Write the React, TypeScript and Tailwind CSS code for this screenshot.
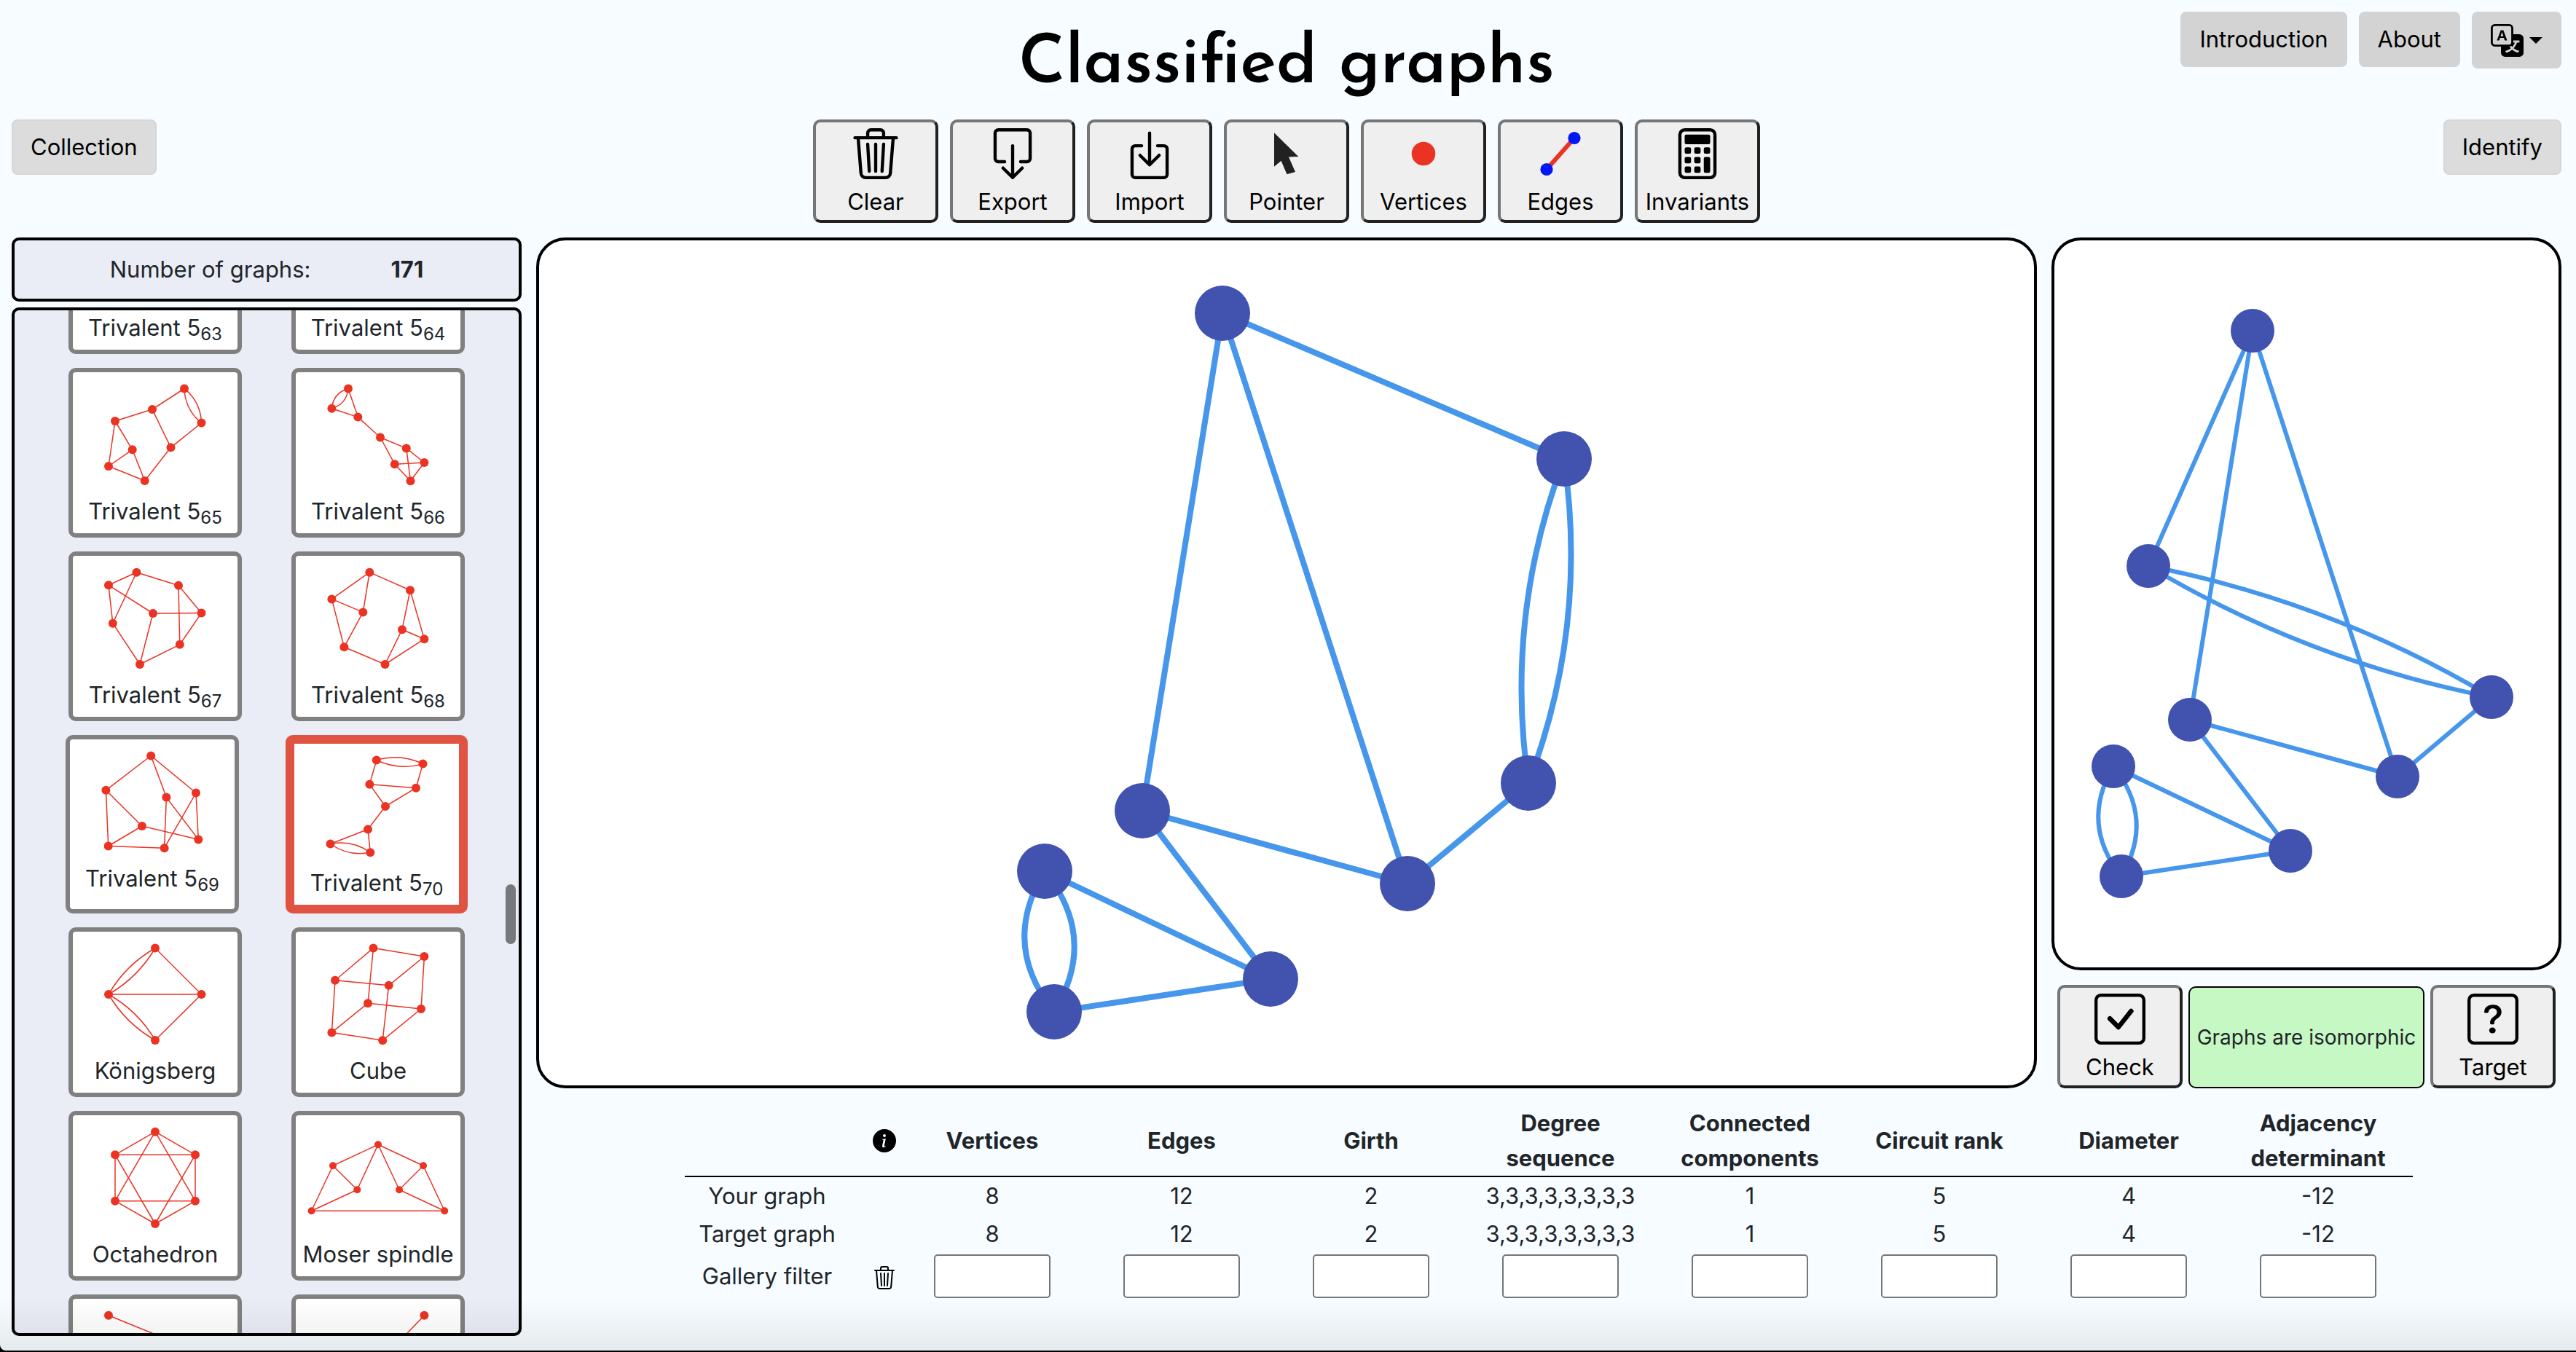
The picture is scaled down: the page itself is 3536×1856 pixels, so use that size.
import type { ReactNode } from 'react';
import {
  BsBoxArrowDown,
  BsBoxArrowInDown,
  BsCalculator,
  BsCheckSquare,
  BsInfoCircleFill,
  BsQuestionSquare,
  BsTranslate,
  BsTrash3,
} from 'react-icons/bs';

type Point = [number, number];
// An edge joins two vertices; the optional third entry is the sideways bulge of a curved edge.
type Edge = [number, number, number?];
type GraphData = { nodes: Point[]; edges: Edge[] };

function edgePath(nodes: Point[], [a, b, bulge = 0]: Edge) {
  const [x1, y1] = nodes[a];
  const [x2, y2] = nodes[b];
  if (!bulge) return `M${x1} ${y1}L${x2} ${y2}`;
  const len = Math.hypot(x2 - x1, y2 - y1);
  const cx = (x1 + x2) / 2 - ((y2 - y1) / len) * bulge * 2;
  const cy = (y1 + y2) / 2 + ((x2 - x1) / len) * bulge * 2;
  return `M${x1} ${y1}Q${cx} ${cy} ${x2} ${y2}`;
}

type DrawingProps = {
  graph: GraphData;
  width: number;
  height: number;
  radius: number;
  stroke: number;
  edgeColor: string;
  nodeColor: string;
  className: string;
  label: string;
};

function GraphDrawing({ graph, width, height, radius, stroke, edgeColor, nodeColor, className, label }: DrawingProps) {
  return (
    <svg viewBox={`0 0 ${width} ${height}`} className={className} role="img" aria-label={label}>
      <g fill="none" stroke={edgeColor} strokeWidth={stroke}>
        {graph.edges.map((edge, i) => (
          <path key={i} d={edgePath(graph.nodes, edge)} />
        ))}
      </g>
      <g fill={nodeColor}>
        {graph.nodes.map(([x, y], i) => (
          <circle key={i} cx={x} cy={y} r={radius} />
        ))}
      </g>
    </svg>
  );
}

const yourGraph: GraphData = {
  nodes: [[938, 100], [1407, 300], [1358, 745], [1192, 883], [828, 783], [1004, 1014], [694, 866], [707, 1059]],
  edges: [[0, 1], [0, 4], [0, 3], [1, 2, 29], [1, 2, -29], [2, 3], [3, 4], [4, 5], [5, 6], [5, 7], [6, 7, 34], [6, 7, -34]],
};

const targetGraph: GraphData = {
  nodes: [[272, 124], [129, 447], [600, 627], [471, 736], [186, 658], [324, 838], [81, 722], [92, 873]],
  edges: [[0, 1], [0, 4], [0, 3], [1, 2, 22], [1, 2, -22], [2, 3], [3, 4], [4, 5], [5, 6], [5, 7], [6, 7, 26], [6, 7, -26]],
};

type Item = { name: string; sub?: string; selected?: boolean; radius?: number; graph: GraphData };

const empty: GraphData = { nodes: [], edges: [] };

const gallery: Item[][] = [
  [
    { name: 'Trivalent 5', sub: '63', graph: empty },
    { name: 'Trivalent 5', sub: '64', graph: empty },
  ],
  [
    {
      name: 'Trivalent 5',
      sub: '65',
      graph: {
        nodes: [[153, 22.5], [109, 51], [58, 67], [81.7, 106.3], [49, 129], [98.7, 149], [134.5, 103.3], [176.5, 69.6]],
        edges: [[0, 1], [1, 2], [2, 3], [2, 4], [3, 4], [3, 5], [4, 5], [5, 6], [6, 1], [6, 7], [0, 7, 6], [0, 7, -6]],
      },
    },
    {
      name: 'Trivalent 5',
      sub: '66',
      graph: {
        nodes: [[72, 22.5], [49.4, 49.7], [85.3, 61.6], [116, 89.5], [151.8, 104.4], [135.8, 126.2], [176.4, 124], [157.5, 149.2]],
        edges: [[0, 1, 6], [0, 1, -6], [0, 2], [1, 2], [2, 3], [3, 4], [3, 5], [4, 6], [4, 7], [5, 6], [5, 7], [6, 7]],
      },
    },
  ],
  [
    {
      name: 'Trivalent 5',
      sub: '67',
      graph: {
        nodes: [[87.4, 22.7], [49, 40.3], [145, 40.7], [110, 79], [176.5, 78.6], [54.8, 92.7], [146.8, 121.8], [92, 149]],
        edges: [[0, 1], [0, 2], [0, 5], [1, 5], [1, 3], [2, 4], [2, 6], [3, 4], [3, 7], [4, 6], [5, 7], [6, 7]],
      },
    },
    {
      name: 'Trivalent 5',
      sub: '68',
      graph: {
        nodes: [[101.3, 22.7], [49.4, 59.4], [157, 47.2], [92.3, 77.4], [146, 101.2], [176.4, 114.2], [66.4, 125.3], [122.5, 149]],
        edges: [[0, 1], [0, 3], [1, 3], [1, 6], [3, 6], [0, 2], [2, 4], [2, 5], [4, 5], [4, 7], [5, 7], [6, 7]],
      },
    },
  ],
  [
    {
      name: 'Trivalent 5',
      sub: '69',
      graph: {
        nodes: [[111.2, 22.5], [49.4, 69.8], [132.4, 79.6], [173, 73.5], [98.9, 119], [52.7, 146.5], [129.6, 149.2], [176.3, 137.4]],
        edges: [[0, 1], [0, 2], [0, 3], [1, 4], [1, 5], [4, 5], [5, 6], [4, 7], [2, 6], [2, 7], [3, 6], [3, 7]],
      },
    },
    {
      name: 'Trivalent 5',
      sub: '70',
      selected: true,
      graph: {
        nodes: [[112.8, 22.5], [176.5, 27.6], [103.3, 55.7], [167, 60.7], [125, 86], [101, 117.5], [49.5, 137.5], [104.3, 149.3]],
        edges: [[0, 1, 6], [0, 1, -6], [0, 2], [1, 3], [2, 3], [2, 4], [3, 4], [4, 5], [5, 6], [5, 7], [6, 7, 6], [6, 7, -6]],
      },
    },
  ],
  [
    {
      name: 'Königsberg',
      graph: {
        nodes: [[113, 22.5], [49, 86], [176.5, 86], [113, 149]],
        edges: [[0, 1, 6], [0, 1, -6], [1, 3, 6], [1, 3, -6], [0, 2], [1, 2], [2, 3]],
      },
    },
    {
      name: 'Cube',
      graph: {
        nodes: [[106.5, 22.4], [176.4, 34], [54, 66.7], [127.7, 73.8], [99, 98.2], [172, 106], [49.4, 138.4], [119.2, 149.2]],
        edges: [[0, 1], [0, 2], [1, 3], [2, 3], [0, 4], [1, 5], [2, 6], [3, 7], [4, 5], [4, 6], [5, 7], [6, 7]],
      },
    },
  ],
  [
    {
      name: 'Octahedron',
      graph: {
        nodes: [[113, 22.7], [58, 54.3], [168, 54.3], [58, 117.7], [168, 117.7], [113, 149]],
        edges: [[0, 1], [0, 2], [1, 2], [1, 3], [2, 4], [3, 4], [3, 5], [4, 5], [0, 3], [0, 4], [1, 5], [2, 5]],
      },
    },
    {
      name: 'Moser spindle',
      radius: 5,
      graph: {
        nodes: [[113, 40.3], [51, 69.3], [175, 69.3], [84.3, 102.3], [142, 102.3], [21.6, 131.3], [204.2, 131.3]],
        edges: [[0, 1], [0, 2], [0, 3], [0, 4], [1, 3], [1, 5], [3, 5], [2, 4], [2, 6], [4, 6], [5, 6]],
      },
    },
  ],
  [
    { name: '', graph: { nodes: [[49, 22.7], [177, 75]], edges: [[0, 1]] } },
    { name: '', graph: { nodes: [[176.4, 22.7], [112, 90]], edges: [[0, 1]] } },
  ],
];

function GalleryCard({ item }: { item: Item }) {
  return (
    <button
      type="button"
      aria-pressed={!!item.selected}
      className={
        item.selected
          ? 'flex flex-col rounded-[10px] border-12 border-[#e05342] bg-white'
          : 'flex flex-col rounded-[10px] border-6 border-[#808080] bg-white'
      }
    >
      <GraphDrawing
        graph={item.graph}
        width={226}
        height={167}
        radius={item.radius ?? 6}
        stroke={1.5}
        edgeColor="#ea3323"
        nodeColor="#ea3323"
        className="h-[167px] w-[226px]"
        label={`Drawing of ${item.name}${item.sub ?? ''}`}
      />
      <span className="h-[54px] w-full text-center text-[31px] leading-[48px] whitespace-nowrap">
        {item.name}
        {item.sub && <sub className="text-[24px]">{item.sub}</sub>}
      </span>
    </button>
  );
}

function ToolButton({ label, children }: { label: string; children: ReactNode }) {
  return (
    <button
      type="button"
      className="flex h-[142px] w-[172px] flex-col items-center rounded-[10px] border-4 border-t-[#767676] border-r-[#212121] border-b-[#212121] border-l-[#767676] bg-[#efefef] pt-2 text-black"
    >
      <span className="size-[70px]">{children}</span>
      <span className="mt-[7px] text-[31px] leading-[48px] whitespace-nowrap">{label}</span>
    </button>
  );
}

function PointerIcon() {
  return (
    <svg viewBox="0 0 70 70" className="size-[70px]" aria-hidden="true">
      <path d="M18 6.3L51.3 39L38 39.4L47 60L35.5 63.3L27.6 44.7L18 52.7Z" fill="#212121" />
    </svg>
  );
}

function VertexIcon() {
  return (
    <svg viewBox="0 0 70 70" className="size-[70px]" aria-hidden="true">
      <circle cx="35" cy="35" r="16.3" fill="#ea3323" />
    </svg>
  );
}

function EdgeIcon() {
  return (
    <svg viewBox="0 0 70 70" className="size-[70px]" aria-hidden="true">
      <path d="M16 56.5L54 13.5" stroke="#ea3323" strokeWidth="6" />
      <circle cx="54" cy="13.5" r="8.6" fill="#0017f5" />
      <circle cx="16" cy="56.5" r="8.6" fill="#0017f5" />
    </svg>
  );
}

const navButton = 'h-[76px] rounded-lg border-2 border-[#d3d3d3] bg-[#d3d3d3] px-6 text-[31px] leading-[48px] text-black';
const sideButton = 'h-[76px] rounded-lg border-2 border-[#d6d6d6] bg-[#dcdcdc] px-6 text-[31px] leading-[48px] text-black';

const columns = [
  { head: 'Vertices', value: '8' },
  { head: 'Edges', value: '12' },
  { head: 'Girth', value: '2' },
  { head: 'Degree sequence', value: '3,3,3,3,3,3,3,3' },
  { head: 'Connected components', value: '1' },
  { head: 'Circuit rank', value: '5' },
  { head: 'Diameter', value: '4' },
  { head: 'Adjacency determinant', value: '-12' },
];

function InvariantsTable() {
  return (
    <table className="mx-auto w-[2372px] max-w-full table-fixed border-collapse text-center text-[31px] leading-[48px]">
      <colgroup>
        <col className="w-[226px]" />
        <col className="w-[66px]" />
        {columns.map((c) => (
          <col key={c.head} />
        ))}
      </colgroup>
      <thead>
        <tr className="border-b-2 border-black">
          <td />
          <th scope="col" className="pr-0.5">
            <button type="button" aria-label="About the invariants" className="ml-auto block">
              <BsInfoCircleFill className="size-8 text-black" />
            </button>
          </th>
          {columns.map((c) => (
            <th key={c.head} scope="col" className="px-8 font-bold">
              {c.head}
            </th>
          ))}
        </tr>
      </thead>
      <tbody>
        {['Your graph', 'Target graph'].map((row) => (
          <tr key={row}>
            <th scope="row" className="py-0.5 font-normal">
              {row}
            </th>
            <td />
            {columns.map((c) => (
              <td key={c.head} className="py-0.5">
                {c.value}
              </td>
            ))}
          </tr>
        ))}
        <tr>
          <th scope="row" className="py-0.5 font-normal">
            Gallery filter
          </th>
          <td className="pt-1 pr-0.5">
            <button type="button" aria-label="Clear filter" className="ml-auto block">
              <BsTrash3 className="size-8 text-black" />
            </button>
          </td>
          {columns.map((c) => (
            <td key={c.head} className="py-0.5">
              <input
                type="text"
                aria-label={`Filter by ${c.head}`}
                className="mx-auto block h-[60px] w-[160px] rounded-[5px] border-2 border-[#767676] bg-white px-2"
              />
            </td>
          ))}
        </tr>
      </tbody>
    </table>
  );
}

export default function App() {
  return (
    <div className="h-screen min-h-[1400px] bg-black pb-0.5">
      <div className="relative flex h-full flex-col overflow-hidden rounded-bl-lg bg-[#f6fcff] pr-5 pb-5 pl-4 font-[Inter,sans-serif] text-[#212529]">
        <header className="grid h-[164px] shrink-0 grid-cols-[1fr_auto_1fr]">
          <h1 className="col-start-2 pt-6 font-['Josefin_Sans',Lato,sans-serif] text-[93px] leading-[132px] font-semibold text-black">
            Classified graphs
          </h1>
          <nav className="flex items-start justify-end gap-4 pt-4">
            <button type="button" className={navButton}>
              Introduction
            </button>
            <button type="button" className={navButton}>
              About
            </button>
            <button
              type="button"
              aria-label="Language"
              className="flex h-[78px] items-center gap-2 rounded-lg border-2 border-[#d3d3d3] bg-[#d3d3d3] px-6 text-black"
            >
              <BsTranslate className="size-[45px]" />
              <svg viewBox="0 0 18 9" className="h-[9px] w-[18px]" aria-hidden="true">
                <path d="M0 0H18L9 9Z" fill="currentColor" />
              </svg>
            </button>
          </nav>
        </header>

        <div className="grid h-[162px] shrink-0 grid-cols-[700px_1fr_700px] items-start gap-x-5">
          <div>
            <button type="button" className={sideButton}>
              Collection
            </button>
          </div>
          <div className="flex justify-center gap-4">
            <ToolButton label="Clear">
              <BsTrash3 className="size-[70px]" />
            </ToolButton>
            <ToolButton label="Export">
              <BsBoxArrowDown className="size-[70px]" />
            </ToolButton>
            <ToolButton label="Import">
              <BsBoxArrowInDown className="size-[70px]" />
            </ToolButton>
            <ToolButton label="Pointer">
              <PointerIcon />
            </ToolButton>
            <ToolButton label="Vertices">
              <VertexIcon />
            </ToolButton>
            <ToolButton label="Edges">
              <EdgeIcon />
            </ToolButton>
            <ToolButton label="Invariants">
              <BsCalculator className="size-[70px]" />
            </ToolButton>
          </div>
          <div className="flex justify-end">
            <button type="button" className={sideButton}>
              Identify
            </button>
          </div>
        </div>

        <main className="flex min-h-0 flex-1 gap-5">
          <aside className="flex w-[700px] shrink-0 flex-col gap-2">
            <div className="flex h-[88px] shrink-0 items-center justify-center gap-[110px] rounded-[10px] border-4 border-black bg-[#eaedf6] text-[31px] leading-[48px]">
              <span>Number of graphs:</span>
              <b>171</b>
            </div>
            <div className="relative min-h-0 flex-1 overflow-hidden rounded-[10px] border-4 border-black bg-[#eaedf6]">
              <div className="-mt-[173px] flex flex-col gap-[19px] px-1.5">
                {gallery.map((row, i) => (
                  <div key={i} className="flex justify-evenly">
                    {row.map((item, j) => (
                      <GalleryCard key={j} item={item} />
                    ))}
                  </div>
                ))}
              </div>
              <div className="absolute top-[788px] right-1 h-[82px] w-3.5 rounded-full bg-[#76787d]" />
            </div>
          </aside>

          <div className="flex min-w-0 flex-1 flex-col">
            <div className="flex min-h-0 flex-1 gap-5">
              <section className="min-w-0 flex-1 rounded-[40px] border-4 border-black bg-white">
                <GraphDrawing
                  graph={yourGraph}
                  width={2052}
                  height={1160}
                  radius={38}
                  stroke={8}
                  edgeColor="#4696ec"
                  nodeColor="#4252af"
                  className="h-full w-full"
                  label="Your graph"
                />
              </section>
              <section className="flex w-[700px] shrink-0 flex-col gap-5">
                <div className="min-h-0 flex-1 rounded-[40px] border-4 border-black bg-white">
                  <GraphDrawing
                    graph={targetGraph}
                    width={692}
                    height={998}
                    radius={30}
                    stroke={6}
                    edgeColor="#4696ec"
                    nodeColor="#4252af"
                    className="h-full w-full"
                    label="Target graph"
                  />
                </div>
                <div className="flex items-end gap-2 px-2">
                  <ToolButton label="Check">
                    <BsCheckSquare className="size-[70px]" />
                  </ToolButton>
                  <output className="flex h-[140px] flex-1 items-center justify-center rounded-[10px] border-2 border-black bg-[#c6f8c4] text-[28px] whitespace-nowrap">
                    Graphs are isomorphic
                  </output>
                  <ToolButton label="Target">
                    <BsQuestionSquare className="size-[70px]" />
                  </ToolButton>
                </div>
              </section>
            </div>
            <section className="h-[340px] shrink-0 pt-6">
              <InvariantsTable />
            </section>
          </div>
        </main>

        <div className="pointer-events-none absolute inset-x-0 bottom-0 h-[72px] bg-linear-to-b from-black/0 to-black/7" />
      </div>
    </div>
  );
}
